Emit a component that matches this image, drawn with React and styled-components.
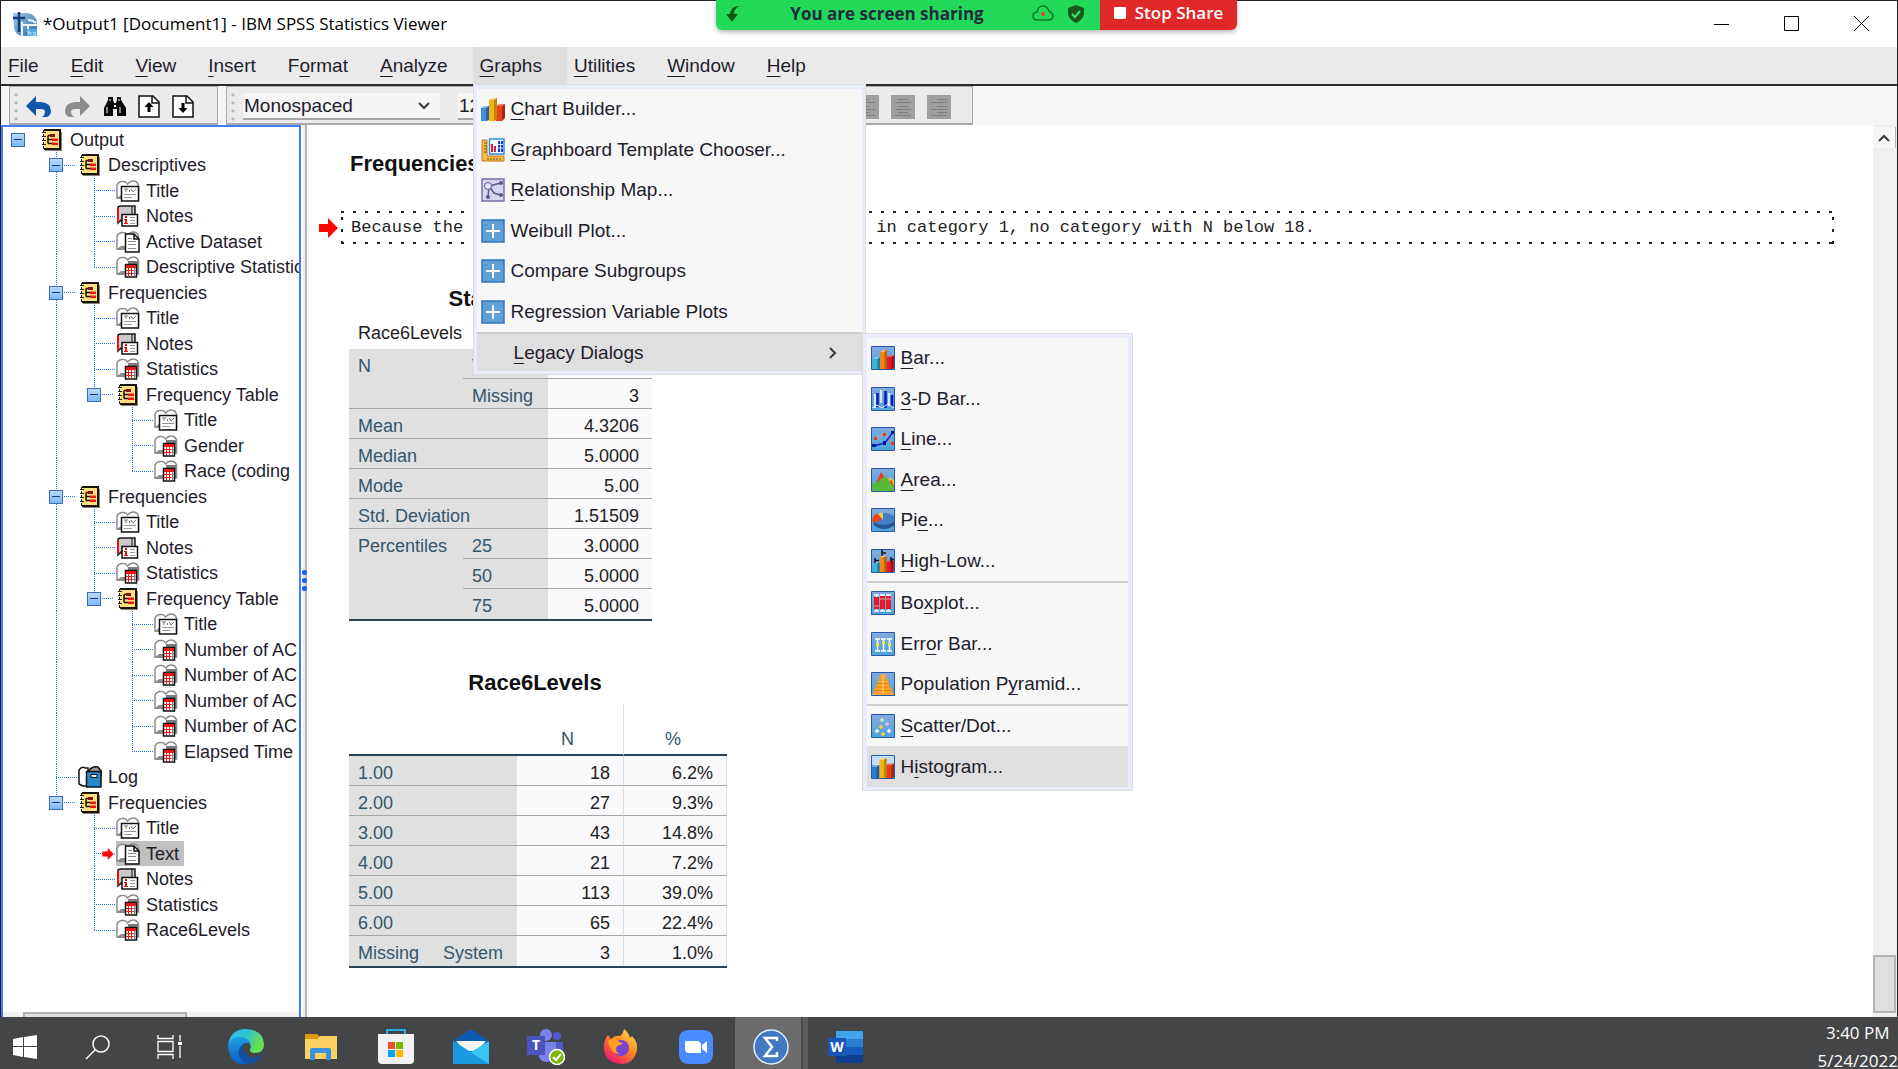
import React from "react";
import styled, { createGlobalStyle, css } from "styled-components";

const sans = `"Liberation Sans", Arial, sans-serif`;
const shell = `"Open Sans", "Noto Sans", sans-serif`;

const GlobalStyle = createGlobalStyle`
  * { box-sizing: border-box; }
  html, body { margin: 0; height: 100%; overflow: hidden; background: #fff; }
  button, select { font: inherit; color: inherit; margin: 0; padding: 0; border: 0; background: none; }
  h1, h2, h3, p { margin: 0; font: inherit; }
`;

/* ---------- frame ---------- */

const Desktop = styled.div`
  display: flex;
  flex-direction: column;
  height: 100vh;
  overflow: hidden;
  font-family: ${sans};
  color: #1f1c2c;
`;

const AppWindow = styled.main`
  flex: 1;
  min-height: 0;
  display: flex;
  flex-direction: column;
  background: #fff;
  border: solid #262024;
  border-width: 1px 1px 0 1px;
`;

const TitleBar = styled.header`
  height: 46px;
  flex: none;
  display: flex;
  align-items: center;
  padding-left: 12px;
`;

const WindowTitle = styled.h1`
  flex: 1;
  margin-left: 6px;
  font-family: ${shell};
  font-size: 17px;
  line-height: 24px;
  color: #000;
`;

const CaptionButton = styled.button`
  width: 70px;
  height: 46px;
  display: grid;
  place-items: center;
`;

/* ---------- screen sharing banner ---------- */

const ShareBanner = styled.aside`
  position: absolute;
  top: 0;
  left: calc(50% - 233px);
  z-index: 20;
  display: flex;
  height: 30px;
  border-radius: 0 0 6px 6px;
  overflow: hidden;
  font-family: ${shell};
  font-size: 17px;
  line-height: 24px;
  font-weight: 700;
  box-shadow: 0 2px 5px rgba(0, 0, 0, 0.3);
`;

const ShareStatus = styled.div`
  width: 384px;
  display: flex;
  align-items: center;
  padding: 0 16px 3px 10px;
  background: #23d959;
  color: #1e2c3c;
`;

const ShareText = styled.span`
  flex: 1;
  text-align: center;
`;

const ShareIcons = styled.span`
  display: flex;
  align-items: center;
  gap: 14px;
`;

const StopShare = styled.button`
  width: 137px;
  display: flex;
  align-items: center;
  justify-content: center;
  gap: 9px;
  padding-bottom: 4px;
  background: #e02828;
  color: #fff;
  font-weight: 600;
`;

const StopSquare = styled.span`
  width: 12px;
  height: 12px;
  border-radius: 1px;
  background: #fff;
`;

/* ---------- menus ---------- */

const MenuBar = styled.nav`
  height: 39px;
  flex: none;
  display: flex;
  background: #eaeaea;
  border-bottom: 2px solid #2b2b2b;
  font-size: 19px;
  line-height: 24px;
`;

const MenuSlot = styled.div`
  position: relative;
  display: flex;
`;

const MenuTitle = styled.button`
  padding: 0 25px 0 7px;
  background: ${(p) => (p.$open ? "#dfdfdf" : "transparent")};
`;

const Mnemonic = styled.span`
  text-decoration: underline;
  text-decoration-thickness: 1px;
  text-underline-offset: 4px;
`;

const Popup = styled.div`
  position: absolute;
  z-index: 10;
  top: ${(p) => (p.$sub ? "-1px" : "37px")};
  left: ${(p) => (p.$sub ? "100%" : "0")};
  width: ${(p) => (p.$sub ? "271px" : "393px")};
  padding: ${(p) => (p.$sub ? "4px 4px 3px" : "4px 3px 3px")};
  border: 1px solid #dcdce0;
  background: #e9edfb;
`;

const MenuGroup = styled.div`
  position: relative;
  background: #f7f7f7;
  & + & { border-top: 2px solid #cfcfcf; }
`;

const MenuItem = styled.button`
  width: 100%;
  height: 40px;
  display: flex;
  align-items: center;
  gap: 6px;
  padding: 0 25px 0 4px;
  text-align: left;
  background: ${(p) => (p.$active ? "#dfdfdf" : "transparent")};
  &:nth-child(even) { height: 41px; }
`;

const SubmenuItem = styled(MenuItem)`
  height: 37px;
  justify-content: space-between;
  padding-left: 37px;
`;

/* ---------- toolbars ---------- */

const ToolbarRow = styled.div`
  height: 39px;
  flex: none;
  display: flex;
  gap: 8px;
  padding-left: 8px;
  background: #f6f6f6;
`;

const Toolbar = styled.div`
  display: flex;
  align-items: center;
  gap: 8px;
  width: ${(p) => p.$width}px;
  padding: 3px 20px 0 4px;
  border: 1px solid #a9a9a9;
  border-bottom-width: 2px;
  background: #ebebeb;
`;

const ToolGroup = styled.div`
  display: flex;
  align-items: center;
  gap: ${(p) => p.$gap}px;
`;

const Grip = styled.span`
  width: 4px;
  height: 32px;
  background: radial-gradient(circle at 2px 4px, #b4b4b4 1px, #ebebeb 2px) 0 0 / 4px 8px;
`;

const ToolButton = styled.button`
  display: grid;
  place-items: center;
  width: 26px;
  height: 28px;
`;

const Field = styled.label`
  position: relative;
  display: flex;
  width: ${(p) => p.$width}px;
  height: 27px;
  background: #f5f5f5;
  border-bottom: 2px solid #a6a6a6;
  svg { position: absolute; right: 10px; top: 9px; pointer-events: none; }
`;

const Select = styled.select`
  appearance: none;
  width: 100%;
  padding-left: 1px;
  font-size: 19px;
  line-height: 24px;
`;

const Spacer = styled.span`
  flex: 1;
`;

/* ---------- outline tree ---------- */

const Workspace = styled.div`
  flex: 1;
  min-height: 0;
  display: flex;
`;

const Outline = styled.section`
  width: 300px;
  flex: none;
  display: flex;
  flex-direction: column;
  overflow: hidden;
  border: solid #3f7df0;
  border-width: 2px 2px 0 2px;
  font-size: 18px;
  line-height: 24px;
`;

const TreeList = styled.div`
  flex: 1;
  min-height: 0;
`;

const TreeRow = styled.div`
  display: flex;
  align-items: center;
  height: 25px;
  padding-left: 8px;
  white-space: nowrap;
  &:nth-child(even) { height: 26px; }
`;

const vDots = "repeating-linear-gradient(#1f7af0 0 1px, transparent 1px 2px)";
const hDots = "repeating-linear-gradient(90deg, #1f7af0 0 1px, transparent 1px 2px)";

const Rail = styled.span`
  flex: none;
  align-self: stretch;
  width: 38px;
  ${(p) => p.$line && css`background: ${vDots} 7px 0 / 1px 100% no-repeat;`}
`;

const Branch = styled.span`
  flex: none;
  align-self: stretch;
  width: 29px;
  display: flex;
  align-items: center;
  padding-left: ${(p) => (p.$pointer ? "15px" : "0")};
  ${(p) => p.$joined && css`
    background:
      ${vDots} 7px 0 / 1px ${p.$last ? "52%" : "100%"} no-repeat,
      ${hDots} 7px 50% / ${p.$book ? "20px" : "22px"} 1px no-repeat;
  `}
`;

const Toggle = styled.button`
  width: 14px;
  height: 14px;
  display: grid;
  place-items: center;
  border: 1px solid #3c6cb8;
  background: linear-gradient(#b9dafc, #7db8f8);
  &::after { content: ""; width: 8px; height: 1px; background: #173f80; }
`;

const Leaf = styled.span`
  display: flex;
  align-items: center;
  gap: 6px;
  height: 25px;
  padding-right: 5px;
  background: ${(p) => (p.$selected ? "#c0c0c0" : "transparent")};
`;

const TreeScroll = styled.div`
  height: 5px;
  flex: none;
  padding: 0 20px;
  background: #f1f1f1;
`;

const TreeThumb = styled.div`
  width: 164px;
  height: 5px;
  border: 2px solid #b0b0b0;
  border-bottom: 0;
  background: #dedede;
`;

const Splitter = styled.div`
  width: 6px;
  flex: none;
  display: flex;
  flex-direction: column;
  align-items: flex-end;
  justify-content: center;
  gap: 3px;
  padding-top: 18px;
  background: linear-gradient(90deg, #fff 0 2px, #ececec 2px 4px, #b9b9b9 4px 6px);
`;

const SplitDot = styled.span`
  width: 5px;
  height: 5px;
  border-radius: 2px;
  background: #1463ff;
`;

/* ---------- output document ---------- */

const Document = styled.section`
  flex: 1;
  min-width: 0;
  padding: 26px 39px 0 12px;
`;

const Heading = styled.h2`
  margin-left: 31px;
  font-size: 22px;
  line-height: 26px;
  font-weight: 700;
  color: #111;
`;

const NoteRow = styled.div`
  display: flex;
  align-items: center;
  gap: 3px;
  margin-top: 34px;
`;

const dash = "repeating-linear-gradient(90deg, #222 0 3px, transparent 3px 12px)";
const dot = "repeating-linear-gradient(transparent 0 6px, #222 6px 9px, transparent 9px 12px)";

const NoteBox = styled.p`
  flex: 1;
  display: flex;
  align-items: center;
  gap: 413px;
  height: 33px;
  padding-left: 10px;
  background:
    ${dash} 0 0 / 100% 2px no-repeat,
    ${dash} 0 100% / 100% 2px no-repeat,
    ${dot} 0 0 / 2px 100% no-repeat,
    ${dot} 100% 0 / 2px 100% no-repeat;
  font-family: "Liberation Mono", "Courier New", monospace;
  font-size: 17px;
  line-height: 24px;
  color: #222;
`;

const Figure = styled.figure`
  width: ${(p) => p.$width}px;
  margin: ${(p) => p.$top}px 0 0 30px;
`;

const FigureTitle = styled.h3`
  margin-bottom: 8px;
  padding-right: 6px;
  font-size: 22px;
  line-height: 26px;
  font-weight: 700;
  text-align: center;
  color: #111;
`;

const FigureNote = styled.p`
  padding: 0 0 3px 9px;
  font-size: 18px;
  line-height: 26px;
  color: #222;
`;

const DataTable = styled.table`
  width: 100%;
  table-layout: fixed;
  border-collapse: separate;
  border-spacing: 0;
  border-bottom: 2px solid #2a4456;
  font-size: 18px;
  line-height: 24px;
  tbody tr:last-child > * { border-bottom: 0; }
`;

const Stub = styled.th`
  height: 30px;
  padding: 5px 0 0 9px;
  vertical-align: top;
  text-align: left;
  font-weight: 400;
  color: #33566c;
  background: #e0e0e0;
  border-bottom: 1px solid ${(p) => (p.$open ? "#e0e0e0" : "#a6a6a6")};
`;

const Cell = styled.td`
  height: 30px;
  padding: 5px 13px 0 0;
  vertical-align: top;
  text-align: right;
  color: #222;
  background: #f9f9fb;
  border-bottom: 1px solid #a6a6a6;
  border-right: ${(p) => (p.$ruled ? "1px solid #dedede" : "0")};
`;

const Head = styled.th`
  height: 52px;
  padding: 0 5px 3px 0;
  vertical-align: bottom;
  font-weight: 400;
  color: #33566c;
  border-bottom: 2px solid #2a4456;
  border-right: ${(p) => (p.$ruled ? "1px solid #dedede" : "0")};
`;

const ScrollTrack = styled.div`
  width: 24px;
  flex: none;
  display: flex;
  flex-direction: column;
  justify-content: space-between;
  padding: 2px 1px 4px 0;
  background: #f0f0f0;
`;

const ScrollUp = styled.button`
  height: 21px;
  display: grid;
  place-items: center;
  background: #f7f7f7;
  border-right: 1px solid #b5b5b5;
`;

const ScrollThumb = styled.div`
  height: 58px;
  border: 2px solid #b2b2b2;
  background: #dfdfdf;
`;

/* ---------- taskbar ---------- */

const Taskbar = styled.footer`
  height: 52px;
  flex: none;
  display: flex;
  background: #444546;
  overflow: hidden;
`;

const TaskButton = styled.button`
  display: grid;
  place-items: center;
  width: ${(p) => p.$width}px;
  padding-top: 8px;
`;

const TaskGroup = styled.div`
  display: flex;
  margin-left: ${(p) => p.$lead}px;
`;

const ActiveTask = styled(TaskButton)`
  background: linear-gradient(90deg, transparent 0 2px, #6b6b6b 2px 68px, #4a4a4a 68px 70px, #5b5b5b 70px);
`;

const Clock = styled.div`
  margin-left: auto;
  padding-top: 2px;
  display: flex;
  flex-direction: column;
  align-items: center;
  font-family: ${shell};
  font-size: 17px;
  line-height: 28px;
  color: #fff;
`;

/* ---------- drawings ---------- */

const Svg = ({ s = 24, w, h, vb, children }) => (
  <svg width={w || s} height={h || s} viewBox={vb || `0 0 ${w || s} ${h || s}`} fill="none" aria-hidden="true">
    {children}
  </svg>
);

const SpssLogo = () => (
  <Svg>
    <defs>
      <linearGradient id="spss" x1="0" y1="0" x2="1" y2="1">
        <stop offset="0" stopColor="#a9cdea" /><stop offset="1" stopColor="#2a6ba8" />
      </linearGradient>
    </defs>
    <path d="M0 1H14Q24 2 24 12V24H8Q2 22 1 16Z" fill="url(#spss)" />
    <path d="M9 10V24M15 12V24M9 13H24M15 8Q20 8 23 11" stroke="#eaf4fc" strokeWidth="2" />
    <path d="M0 6H12M6 0V20" stroke="#14387c" strokeWidth="2.5" />
    <path d="M14 17H24V24H14Z" fill="#5aa9e0" />
    <path d="M15.500 18V23M15.500 20.500H18V23M20 20.500H22.500V23H20" stroke="#b9e0f8" />
  </Svg>
);

const Chevron = () => (
  <Svg w={12} h={8}><path d="M1 1L6 6L11 1" stroke="#3a3a3a" strokeWidth="2" /></Svg>
);

const Undo = ({ flip, color }) => (
  <Svg w={26} h={24}>
    <g transform={flip ? "matrix(-1 0 0 1 26 0)" : undefined}>
      <path d="M0 11L10 1V7H15Q25 8 25 16Q25 20 21 22H16Q19 20 19 17Q19 14 15 14H10V21Z" fill={color} />
    </g>
  </Svg>
);

const Binoculars = () => (
  <Svg>
    <path d="M6 2H10V5L11 8H13L14 5V2H18V5L23 13V21H14V14H10V21H1V13L5 5V2Z" fill="#080808" />
    <path d="M6 5H8M15 5H17M4 12V18M17 12V18" stroke="#fff" />
    <path d="M11 10H13V12H11Z" fill="#fff" />
  </Svg>
);

const PageArrow = ({ up }) => (
  <Svg w={22} h={24}>
    <path d="M1 1H15L21 7V22H1Z" fill="#fff" stroke="#111" strokeWidth="1.500" />
    <path d="M14 1V8H21" stroke="#111" strokeWidth="1.500" />
    <path d={up ? "M11 7L15.500 12H12.500V17H9.500V12H6.500Z" : "M11 18L6.500 13H9.500V8H12.500V13H15.500Z"} fill="#000" />
  </Svg>
);

const AlignIcon = ({ kind }) => {
  const long = [4, 20];
  const short = kind === "left" ? [4, 14] : kind === "right" ? [10, 20] : [7, 17];
  return (
    <Svg>
      <path d="M0 0H24V24H0Z" fill="#9f9f9f" />
      {[5, 8, 12, 15, 18, 21].map((y, i) => {
        const [a, b] = i % 2 ? long : short;
        return <path key={y} d={`M${a} ${y - 0.5}H${b}`} stroke="#7d7d7d" />;
      })}
    </Svg>
  );
};

const Book = () => (
  <Svg w={24} h={22}>
    <path d="M5 3H22V22H5Z" fill="#8b8574" />
    <path d="M4 1H20V20H4Z" fill="#ffe07e" />
    <path d="M4 1H20V20H4" stroke="#1a1408" strokeWidth="2" />
    <path d="M2 3.500H6M2 7.500H6M2 11.500H6M2 15.500H6" stroke="#222" />
    <path d="M3.500 1V20" stroke="#222" strokeDasharray="3 1" />
    <path d="M8 6.500V14.500M8 6.500H10M8 10.500H12M8 14.500H12" stroke="#111" strokeWidth="1.500" />
    <path d="M10 5H15V8H10Z" fill="#8d1111" />
    <path d="M12 9.500H18V12H12ZM12 13.500H18V16H12Z" fill="#f01515" />
  </Svg>
);

const LeafBase = ({ dark }) => (
  <>
    <path d="M1 18V5Q3 1 7 1.500Q10 1 11.500 4Q14 1 17 1Q21 1 22.500 5V18Z" fill="#fff" stroke="#8c8c8c" strokeWidth="1.500" />
    {dark && <path d="M12 5L22 5V18H12Z" fill="#7c7c7c" />}
    <path d="M1 18L5 15H10V19H1Z" fill="#8c8c8c" />
  </>
);

const TitleIcon = () => (
  <Svg w={24} h={22}>
    <LeafBase />
    <path d="M5.500 6.500H22.500V21H5.500Z" fill="#fff" stroke="#111" strokeWidth="1.500" />
    <path d="M8 9H12M10 9V12M13.500 10V12M15 9L17 12L20 9" stroke="#777" />
    <path d="M8 14.500H20M8 17.500H16" stroke="#999" />
  </Svg>
);

const NotesIcon = () => (
  <Svg w={24} h={22}>
    <path d="M2 2Q3 1 5 1H19V16H4L2 18Z" fill="#c9c9c9" stroke="#1a1a1a" strokeWidth="1.500" />
    <path d="M1 3H3V17H1Z" fill="#e81414" />
    <path d="M16 1V10M4 15H6" stroke="#111" />
    <path d="M6 9.500H21.500V21H6Z" fill="#fff" stroke="#111" strokeWidth="1.500" />
    <path d="M9 11H11V13H9ZM8 14H11V18H12V19H8V18H9V15H8Z" fill="#f01515" />
    <path d="M14 12.500H19M14 15.500H19M14 18.500H19" stroke="#999" />
  </Svg>
);

const TextIcon = () => (
  <Svg w={24} h={22}>
    <LeafBase />
    <path d="M9.500 3H18L23 8V21H9.500Z" fill="#fff" stroke="#111" strokeWidth="1.500" />
    <path d="M18 3V8H23" stroke="#111" strokeWidth="1.500" />
    <path d="M12 7.500H16M12 10.500H20M12 13.500H20M12 17.500H20" stroke="#888" />
  </Svg>
);

const GridIcon = () => (
  <Svg w={24} h={22}>
    <LeafBase dark />
    <path d="M9.500 8.500H20.500V21H9.500Z" fill="#fff" stroke="#111" strokeWidth="1.500" />
    <path d="M10 9H20V12H10Z" fill="#f01515" />
    <path d="M12.500 11V20M15.500 11V20M10 14.500H17M10 17.500H17" stroke="#f01515" />
    <path d="M18.500 12V20M17 14.500H20M17 17.500H20" stroke="#888" />
  </Svg>
);

const LogIcon = () => (
  <Svg w={24} h={22}>
    <path d="M1 4Q4 0 7 2H10V20H5L1 18Z" fill="#fff" stroke="#111" strokeWidth="1.500" />
    <path d="M11 4Q15 0 20 1L23 5V9H11Z" fill="#9a9a9a" stroke="#111" strokeWidth="1.500" />
    <path d="M8.500 5.500H23V21H8.500Z" fill="#2a87c8" stroke="#111" strokeWidth="1.500" />
    <path d="M13 8.500H19V11.500H13Z" fill="#d9ecfa" stroke="#111" />
  </Svg>
);

const RedArrow = ({ small }) => (
  <Svg w={small ? 12 : 19} h={small ? 12 : 20} vb="0 0 19 20">
    <path d="M0 6H9V0L19 10L9 20V14H0Z" fill="#fb0505" />
  </Svg>
);

const Bars3D = ({ a = "#3f8ee0", b = "#f0b414", c = "#e8401c" }) => (
  <g>
    <path d="M0 11L3 9H8V23L6 24H0Z" fill={a} />
    <path d="M5 11L8 9V22L5 24Z" fill="#000" opacity="0.3" />
    <path d="M0 11L3 9H8L5 11Z" fill="#fff" opacity="0.4" />
    <path d="M15 9L18 7H24V21L21 24H15Z" fill={c} />
    <path d="M21 9L24 7V21L21 24Z" fill="#000" opacity="0.3" />
    <path d="M15 9L18 7H24L21 9Z" fill="#fff" opacity="0.3" />
    <path d="M8 3L11 1H16V22L14 24H8Z" fill={b} />
    <path d="M13 3L16 1V22L13 24Z" fill="#000" opacity="0.25" />
    <path d="M8 3L11 1H16L13 3Z" fill="#fff" opacity="0.45" />
  </g>
);

const ChartBuilderIcon = () => <Svg><Bars3D /></Svg>;

const GraphboardIcon = () => (
  <Svg>
    <path d="M1 2H6V18H23V23H1Z" fill="#f4c04a" stroke="#c07818" />
    <path d="M3 5H6M3 8H6M3 11H6M3 14H6M7 20V22M10 20V22M13 20V22M16 20V22M19 20V22" stroke="#7a4a08" />
    <path d="M8.500 1H23V16H8.500Z" fill="#f4faff" stroke="#2b90e0" strokeWidth="1.500" />
    <path d="M10 6H12V14H10ZM13 8H15V14H13Z" fill="#e0203a" />
    <path d="M17 3H22V14H17Z" fill="#1838c0" />
    <path d="M17 6.500H22M17 10H22M19.500 3V14" stroke="#dbe6ff" />
  </Svg>
);

const RelationIcon = () => (
  <Svg>
    <path d="M1 1H23V23H1Z" fill="#d6d4f0" stroke="#7672a8" strokeWidth="1.500" />
    <path d="M8 8L20 5M8 8L13 15L19 17M8 8L7 19" stroke="#5b588c" strokeWidth="1.500" />
    <circle cx="7" cy="8" r="3.500" fill="#e8e6fa" stroke="#5b588c" />
    <circle cx="20" cy="5" r="2" fill="#5b588c" /><circle cx="20" cy="17" r="2" fill="#5b588c" />
    <circle cx="7" cy="19" r="2" fill="#5b588c" />
  </Svg>
);

const PlusIcon = () => (
  <Svg>
    <path d="M1 1H23V23H1Z" fill="#5f9fd4" stroke="#3176c4" strokeWidth="1.500" />
    <path d="M12 5V19M5 12H19" stroke="#f4faff" strokeWidth="2" />
  </Svg>
);

const Tile = ({ children }) => (
  <Svg>
    <defs>
      <linearGradient id="tile" x1="0" y1="0" x2="0" y2="1">
        <stop offset="0" stopColor="#83aade" /><stop offset="1" stopColor="#4ea4d8" />
      </linearGradient>
    </defs>
    <path d="M1 1H23V23H1Z" fill="url(#tile)" />
    {children}
    <path d="M0.500 0.500H23.500V23.500H0.500Z" stroke="#2856a8" />
  </Svg>
);

const tiles = {
  bar: <Tile><g transform="translate(2 3) scale(.88)"><Bars3D a="#38b4dc" b="#f08414" c="#e8142c" /></g></Tile>,
  bar3d: (
    <Tile>
      <path d="M4 7V21M10 3V16M18 6V19" stroke="#fff" strokeWidth="1.500" />
      <path d="M6.500 6V20M14.500 4V21M21 8V20" stroke="#0a18c8" strokeWidth="2.500" />
      <path d="M1 21L6 18L11 21L17 17L23 21" stroke="#e4f0fc" />
    </Tile>
  ),
  line: (
    <Tile>
      <path d="M3 12L13 7L21 16" stroke="#f09080" />
      <path d="M2 19L14 16L22 5" stroke="#1424c8" strokeWidth="1.500" />
      <path d="M3 10H6V13H3ZM12 6H15V9H12ZM20 15H23V18H20Z" fill="#d84020" />
      <path d="M1 17H5V20H1ZM12 14H15V18H12ZM20 4H23V7H20Z" fill="#0814a0" />
    </Tile>
  ),
  area: (
    <Tile>
      <path d="M18 9L23 12V20H17Z" fill="#f4c030" />
      <path d="M4 17L10 4L20 18Z" fill="#ee3c1c" />
      <path d="M1 16L5 15L14 8L23 18V23H1Z" fill="#58b838" />
      <path d="M20 11L23 19L19 14Z" fill="#e03c1c" />
    </Tile>
  ),
  pie: (
    <Tile>
      <ellipse cx="13" cy="14" rx="11" ry="7" fill="#245898" />
      <ellipse cx="13" cy="11" rx="11" ry="6" fill="#4080c8" />
      <path d="M11 12L2 15Q0 9 5 6L7 6Z" fill="#ee4418" />
      <path d="M12 12L7 6Q10 4 12 5Z" fill="#f8c830" />
    </Tile>
  ),
  highlow: (
    <Tile>
      <g transform="translate(2 6) scale(.86 .75)"><Bars3D a="#38b4dc" b="#f08414" c="#e8142c" /></g>
      <path d="M4 9V14M4 11.500H8M11 1V7M11 4H15M20 8V13M20 10.500H23" stroke="#101020" strokeWidth="1.500" />
    </Tile>
  ),
  box: (
    <Tile>
      {[3, 9, 15].map((x, i) => (
        <g key={x}>
          <path d={`M${x} 4H${x + 5}M${x} 20H${x + 5}M${x + 2.5} 4V20`} stroke="#fff" strokeWidth="1.500" />
          <path d={`M${x} ${i ? 5 : 6}H${x + 5}V18H${x}Z`} fill="#e81828" />
          <path d={`M${x} ${i ? 8 : 15}H${x + 5}`} stroke="#f8a0a0" />
        </g>
      ))}
    </Tile>
  ),
  error: (
    <Tile>
      {[6, 12, 18].map((x, i) => (
        <g key={x}>
          <path d={`M${x - 2} 7H${x + 3}M${x - 2} 19H${x + 3}M${x + 0.5} 7V19`} stroke="#fff" strokeWidth="1.500" />
          <path d={`M${x - 1} ${i === 1 ? 9 : 11}H${x + 2}V${i === 1 ? 12 : 14}H${x - 1}Z`} fill="#f4f040" />
        </g>
      ))}
    </Tile>
  ),
  pyramid: (
    <Tile>
      <path d="M10 2H14L23 23H1Z" fill="#fba52c" />
      <path d="M8 8H16M6 11.500H18M5 15H19M3 18.500H21" stroke="#dc7c10" />
      <path d="M12 3V22" stroke="#ffd088" />
    </Tile>
  ),
  scatter: (
    <Tile>
      {[[11, 6, "#c8f0a8"], [16, 10, "#f0b8f0"], [10, 13, "#f8d040"], [6, 17, "#fff"], [18, 17, "#fff"], [12, 20, "#f8d040"]].map(
        ([x, y, c]) => <path key={`${x}-${y}`} d={`M${x - 2} ${y}H${x + 2}M${x} ${y - 2}V${y + 2}`} stroke={c} strokeWidth="1.500" />
      )}
    </Tile>
  ),
  hist: (
    <Tile>
      <path d="M1 1H23V10H1Z" fill="#c4dcf8" />
      <g transform="translate(1 2) scale(.92)"><Bars3D a="#2c7cd4" b="#f4b414" c="#e83c18" /></g>
    </Tile>
  ),
};

const WindowsIcon = () => (
  <Svg><path d="M0 4L10 2V11H0ZM11 2L24 0V11H11ZM0 12H10V22L0 20ZM11 12H24V24L11 22Z" fill="#fff" /></Svg>
);
const SearchIcon = () => (
  <Svg w={25} h={25}><circle cx="16" cy="9" r="8" stroke="#fff" strokeWidth="1.500" /><path d="M10 15L1 24" stroke="#fff" strokeWidth="1.500" /></Svg>
);
const TaskViewIcon = () => (
  <Svg w={25} h={24}>
    <path d="M1 0V3.500H16V0M1 24V19.500H16V24M1 6.500H16V16.500H1ZM23 0V6M23 11V23" stroke="#fff" strokeWidth="1.300" />
    <path d="M21 7H25V10H21Z" fill="#fff" />
  </Svg>
);
const EdgeIcon = () => (
  <Svg s={36}>
    <defs>
      <linearGradient id="edgeTop" x1="0" y1="0" x2="1" y2="0.400">
        <stop offset="0" stopColor="#35b8f0" /><stop offset="0.500" stopColor="#2cc3d2" /><stop offset="1" stopColor="#68e04c" />
      </linearGradient>
      <linearGradient id="edgeLow" x1="0" y1="0" x2="0" y2="1">
        <stop offset="0" stopColor="#1b9de2" /><stop offset="1" stopColor="#0c5fc4" />
      </linearGradient>
    </defs>
    <path d="M0 17Q2 0 18 0Q35 1 36 15Q36 24 27 24Q21 24 22 20Q24 17 21 14Q16 8 8 10Q2 12 0 17Z" fill="url(#edgeTop)" />
    <path d="M0 17Q2 8 12 8Q20 8 23 15Q15 12 13 19Q10 29 20 35Q2 38 0 17Z" fill="url(#edgeLow)" />
    <path d="M14 16Q8 22 12 29Q17 37 26 34Q31 31 34 26Q26 31 19 26Q13 22 17 15Z" fill="#11509e" />
  </Svg>
);
const FolderIcon = () => (
  <Svg w={32} h={27}>
    <path d="M0 0H12L15 3V6H0Z" fill="#dc9a08" />
    <path d="M0 5H12L15 2H32V25H0Z" fill="#fcd062" />
    <path d="M5 26V16Q5 14 7 14H24Q26 14 26 16V26H21V19H10V26Z" fill="#3a92dc" />
  </Svg>
);
const StoreIcon = () => (
  <Svg w={36} h={36}>
    <path d="M9 7V1H27V7" stroke="#2aaae8" strokeWidth="2" />
    <path d="M0 5H36V31Q36 35 32 35H4Q0 35 0 31Z" fill="#f2f2f2" />
    <path d="M10 13H17V20H10Z" fill="#f05022" /><path d="M18 13H25V20H18Z" fill="#7fba00" />
    <path d="M10 21H17V28H10Z" fill="#00a4ef" /><path d="M18 21H25V28H18Z" fill="#ffb900" />
  </Svg>
);
const MailIcon = () => (
  <Svg w={36} h={34}>
    <path d="M0 11L15 1Q18 -1 21 1L36 11V22H0Z" fill="#0d5cb0" />
    <path d="M3 11H33L24 21H12Z" fill="#f4f4f4" />
    <path d="M0 11L18 22L36 11V34H0Z" fill="#38c4f0" />
    <path d="M0 11L36 34H0Z" fill="#1a98e0" />
  </Svg>
);

const IconText = styled.text`
  font-family: ${shell};
  font-weight: 700;
  font-size: ${(p) => p.$size}px;
  fill: #fff;
  text-anchor: middle;
`;

const TeamsIcon = () => (
  <Svg w={38} h={36}>
    <circle cx="19" cy="6" r="6" fill="#7b83eb" /><circle cx="30" cy="7" r="4" fill="#5059c9" />
    <path d="M25 13H36V24Q35 29 30 29H25Z" fill="#5059c9" />
    <path d="M11 13H29V24Q28 33 20 33Q12 33 11 24Z" fill="#7b83eb" />
    <path d="M0 7H18V26H0Z" fill="#4b53bc" />
    <IconText x="9" y="21" $size={14}>T</IconText>
    <circle cx="30" cy="28" r="7.500" fill="#7cb80a" stroke="#fff" strokeWidth="1.500" />
    <path d="M26 28L29 31L34 25" stroke="#fff" strokeWidth="2" />
  </Svg>
);
const FirefoxIcon = () => (
  <Svg w={36} h={36}>
    <defs>
      <linearGradient id="fox" x1="1" y1="0" x2="0.300" y2="1">
        <stop offset="0" stopColor="#fff04a" /><stop offset="0.500" stopColor="#ff8a20" /><stop offset="1" stopColor="#f01870" />
      </linearGradient>
    </defs>
    <path d="M5 6L8 10Q12 6 17 7Q20 5 21 0Q26 4 27 9L29 7Q35 13 34 21Q31 35 18 35Q3 34 1 21Q0 12 5 6Z" fill="url(#fox)" />
    <circle cx="18" cy="19" r="8" fill="#7844d8" />
    <path d="M5 12Q12 7 16 13L20 14Q17 17 14 17Q11 22 17 25Q8 26 5 12Z" fill="#ffa01c" />
  </Svg>
);
const ZoomIcon = () => (
  <Svg s={34}>
    <path d="M10 0H24Q34 0 34 10V24Q34 34 24 34H10Q0 34 0 24V10Q0 0 10 0Z" fill="#4a8cff" />
    <path d="M6 11H18Q22 11 22 15V23H10Q6 23 6 19ZM23 15L28 11V23L23 19Z" fill="#fff" />
  </Svg>
);
const SigmaIcon = () => (
  <Svg s={36}>
    <circle cx="18" cy="18" r="17" fill="#4178c0" stroke="#dcecfc" strokeWidth="1.500" />
    <path d="M24 12V9H12L19 18L12 27H24V23" stroke="#fff" strokeWidth="2.500" />
  </Svg>
);
const WordIcon = () => (
  <Svg w={36} h={32}>
    <path d="M8 0H34Q35 0 35 1V8H8Z" fill="#41a5ee" /><path d="M8 8H35V16H8Z" fill="#2b7cd3" />
    <path d="M8 16H35V24H8Z" fill="#185abd" /><path d="M8 24H35V31Q35 32 34 32H8Z" fill="#103f91" />
    <path d="M0 7H18V25H0Z" fill="#1a56b8" />
    <IconText x="9" y="21" $size={14}>W</IconText>
  </Svg>
);

/* ---------- data ---------- */

const menus = ["&File", "&Edit", "&View", "&Insert", "F&ormat", "&Analyze", "&Graphs", "&Utilities", "&Window", "&Help"];

const graphItems = [
  ["&Chart Builder...", <ChartBuilderIcon />],
  ["&Graphboard Template Chooser...", <GraphboardIcon />],
  ["&Relationship Map...", <RelationIcon />],
  ["Weibull Plot...", <PlusIcon />],
  ["Compare Subgroups", <PlusIcon />],
  ["Regression Variable Plots", <PlusIcon />],
];

const legacyGroups = [
  [["&Bar...", "bar"], ["&3-D Bar...", "bar3d"], ["&Line...", "line"], ["&Area...", "area"], ["Pi&e...", "pie"], ["&High-Low...", "highlow"]],
  [["Bo&xplot...", "box"], ["Err&or Bar...", "error"], ["Population P&yramid...", "pyramid"]],
  [["&Scatter/Dot...", "scatter"], ["H&istogram...", "hist", true]],
];

const icons = { book: Book, title: TitleIcon, notes: NotesIcon, text: TextIcon, grid: GridIcon, log: LogIcon };

const leaf = (label, icon, extra) => ({ label, icon, ...extra });
const branch = (label, children) => ({ label, icon: "book", children });

const outline = branch("Output", [
  branch("Descriptives", [
    leaf("Title", "title"), leaf("Notes", "notes"), leaf("Active Dataset", "text"), leaf("Descriptive Statistics", "grid"),
  ]),
  branch("Frequencies", [
    leaf("Title", "title"), leaf("Notes", "notes"), leaf("Statistics", "grid"),
    branch("Frequency Table", [leaf("Title", "title"), leaf("Gender", "grid"), leaf("Race (coding", "grid")]),
  ]),
  branch("Frequencies", [
    leaf("Title", "title"), leaf("Notes", "notes"), leaf("Statistics", "grid"),
    branch("Frequency Table", [
      leaf("Title", "title"), leaf("Number of AC", "grid"), leaf("Number of AC", "grid"),
      leaf("Number of AC", "grid"), leaf("Number of AC", "grid"), leaf("Elapsed Time", "grid"),
    ]),
  ]),
  leaf("Log", "log"),
  branch("Frequencies", [
    leaf("Title", "title"), leaf("Text", "text", { selected: true }), leaf("Notes", "notes"),
    leaf("Statistics", "grid"), leaf("Race6Levels", "grid"),
  ]),
]);

const flatten = (node, rails = [], last = true, level = 0) => [
  { ...node, rails, last, level },
  ...(node.children || []).flatMap((c, i, all) =>
    flatten(c, level === 0 ? [false] : [...rails, !last], i === all.length - 1, level + 1)
  ),
];

const frequencies = [
  ["1.00", "18", "6.2%"], ["2.00", "27", "9.3%"], ["3.00", "43", "14.8%"],
  ["4.00", "21", "7.2%"], ["5.00", "113", "39.0%"], ["6.00", "65", "22.4%"],
];

/* ---------- parts ---------- */

const Label = ({ text }) => {
  const at = text.indexOf("&");
  if (at < 0) return <span>{text}</span>;
  return (
    <span>
      {text.slice(0, at)}
      <Mnemonic>{text[at + 1]}</Mnemonic>
      {text.slice(at + 2)}
    </span>
  );
};

const GraphsMenu = () => (
  <Popup role="menu">
    <MenuGroup>
      {graphItems.map(([text, icon]) => (
        <MenuItem key={text} role="menuitem">{icon}<Label text={text} /></MenuItem>
      ))}
    </MenuGroup>
    <MenuGroup>
      <SubmenuItem role="menuitem" aria-haspopup="true" aria-expanded="true" $active>
        <Label text="&Legacy Dialogs" />
        <Svg w={8} h={12}><path d="M1 1L6 6L1 11" stroke="#3a3a3a" strokeWidth="2" /></Svg>
      </SubmenuItem>
      <Popup role="menu" $sub>
        {legacyGroups.map((group, i) => (
          <MenuGroup key={i}>
            {group.map(([text, icon, active]) => (
              <MenuItem key={text} role="menuitem" $active={active}>{tiles[icon]}<Label text={text} /></MenuItem>
            ))}
          </MenuGroup>
        ))}
      </Popup>
    </MenuGroup>
  </Popup>
);

const TreeNode = ({ node }) => {
  const Icon = icons[node.icon];
  return (
    <TreeRow role="treeitem" aria-selected={!!node.selected}>
      {node.rails.map((line, i) => <Rail key={i} $line={line} />)}
      <Branch $joined={node.level > 0} $last={node.last} $book={!!node.children} $pointer={node.selected}>
        {node.children && <Toggle aria-label={`Collapse ${node.label}`} />}
        {node.selected && <RedArrow small />}
      </Branch>
      <Leaf $selected={node.selected}><Icon />{node.label}</Leaf>
    </TreeRow>
  );
};

const StatisticsTable = () => (
  <DataTable>
    <colgroup><col style={{ width: 114 }} /><col style={{ width: 85 }} /><col /></colgroup>
    <tbody>
      <tr><Stub rowSpan={2}>N</Stub><Stub>Valid</Stub><Cell>287</Cell></tr>
      <tr><Stub>Missing</Stub><Cell>3</Cell></tr>
      <tr><Stub colSpan={2}>Mean</Stub><Cell>4.3206</Cell></tr>
      <tr><Stub colSpan={2}>Median</Stub><Cell>5.0000</Cell></tr>
      <tr><Stub colSpan={2}>Mode</Stub><Cell>5.00</Cell></tr>
      <tr><Stub colSpan={2}>Std. Deviation</Stub><Cell>1.51509</Cell></tr>
      <tr><Stub rowSpan={3} $open>Percentiles</Stub><Stub>25</Stub><Cell>3.0000</Cell></tr>
      <tr><Stub>50</Stub><Cell>5.0000</Cell></tr>
      <tr><Stub>75</Stub><Cell>5.0000</Cell></tr>
    </tbody>
  </DataTable>
);

const FrequencyTable = () => (
  <DataTable>
    <colgroup><col style={{ width: 85 }} /><col style={{ width: 83 }} /><col style={{ width: 107 }} /><col /></colgroup>
    <thead><tr><Head colSpan={2} aria-label="Level" /><Head $ruled>N</Head><Head>%</Head></tr></thead>
    <tbody>
      {frequencies.map(([level, n, pct]) => (
        <tr key={level}><Stub colSpan={2}>{level}</Stub><Cell $ruled>{n}</Cell><Cell $ruled>{pct}</Cell></tr>
      ))}
      <tr><Stub>Missing</Stub><Stub>System</Stub><Cell $ruled>3</Cell><Cell $ruled>1.0%</Cell></tr>
    </tbody>
  </DataTable>
);

export default function App() {
  return (
    <Desktop>
      <GlobalStyle />
      <ShareBanner>
        <ShareStatus>
          <Svg w={16} h={18}><path d="M15 1Q9 1 8 9H12L6 17L0 9H4Q5 0 15 1Z" fill="#0b5a10" /></Svg>
          <ShareText>You are screen sharing</ShareText>
          <ShareIcons>
            <Svg w={22} h={17}>
              <path d="M5 15Q1 15 1 11Q1 8 5 7Q6 1 11 1Q15 1 17 6Q21 8 21 12Q20 15 17 15Z" stroke="#0a7a28" strokeWidth="1.500" />
              <circle cx="11" cy="9" r="2" fill="#f04030" />
            </Svg>
            <Svg w={16} h={18}>
              <path d="M8 0L16 3V9Q15 15 8 18Q1 15 0 9V3Z" fill="#155c1c" />
              <path d="M4 9L7 12L12 6" stroke="#40e070" strokeWidth="2" />
            </Svg>
          </ShareIcons>
        </ShareStatus>
        <StopShare><StopSquare />Stop Share</StopShare>
      </ShareBanner>

      <AppWindow>
        <TitleBar>
          <SpssLogo />
          <WindowTitle>*Output1 [Document1] - IBM SPSS Statistics Viewer</WindowTitle>
          <CaptionButton aria-label="Minimize"><Svg s={16}><path d="M0 8.500H15" stroke="#000" /></Svg></CaptionButton>
          <CaptionButton aria-label="Maximize"><Svg s={16}><path d="M0.500 0.500H14.500V14.500H0.500Z" stroke="#000" /></Svg></CaptionButton>
          <CaptionButton aria-label="Close"><Svg s={16}><path d="M0 0L15 15M15 0L0 15" stroke="#000" /></Svg></CaptionButton>
        </TitleBar>

        <MenuBar>
          {menus.map((m) => (
            <MenuSlot key={m}>
              <MenuTitle $open={m === "&Graphs"}><Label text={m} /></MenuTitle>
              {m === "&Graphs" && <GraphsMenu />}
            </MenuSlot>
          ))}
        </MenuBar>

        <ToolbarRow>
          <Toolbar $width={209}>
            <Grip />
            <ToolGroup $gap={12}>
              <ToolButton aria-label="Undo"><Undo color="#0f57a8" /></ToolButton>
              <ToolButton aria-label="Redo"><Undo flip color="#8c8c8c" /></ToolButton>
              <ToolButton aria-label="Find"><Binoculars /></ToolButton>
            </ToolGroup>
            <ToolGroup $gap={8}>
              <ToolButton aria-label="Previous page"><PageArrow up /></ToolButton>
              <ToolButton aria-label="Next page"><PageArrow /></ToolButton>
            </ToolGroup>
          </Toolbar>
          <Toolbar $width={747}>
            <Grip />
            <ToolGroup $gap={18}>
              <Field $width={197}>
                <Select aria-label="Font" defaultValue="Monospaced"><option>Monospaced</option></Select>
                <Chevron />
              </Field>
              <Field $width={72}>
                <Select aria-label="Font size" defaultValue="12"><option>12</option></Select>
                <Chevron />
              </Field>
            </ToolGroup>
            <Spacer />
            <ToolGroup $gap={10}>
              <ToolButton aria-label="Align left"><AlignIcon kind="left" /></ToolButton>
              <ToolButton aria-label="Center"><AlignIcon kind="center" /></ToolButton>
              <ToolButton aria-label="Align right"><AlignIcon kind="right" /></ToolButton>
            </ToolGroup>
          </Toolbar>
        </ToolbarRow>

        <Workspace>
          <Outline>
            <TreeList role="tree">
              {flatten(outline).map((node, i) => <TreeNode key={i} node={node} />)}
            </TreeList>
            <TreeScroll><TreeThumb /></TreeScroll>
          </Outline>
          <Splitter><SplitDot /><SplitDot /><SplitDot /></Splitter>

          <Document>
            <Heading>Frequencies</Heading>
            <NoteRow>
              <RedArrow />
              <NoteBox>
                <span>Because the</span>
                <span>in category 1, no category with N below 18.</span>
              </NoteBox>
            </NoteRow>
            <Figure $width={303} $top={42}>
              <FigureTitle>Statistics</FigureTitle>
              <FigureNote>Race6Levels</FigureNote>
              <StatisticsTable />
            </Figure>
            <Figure $width={378} $top={49}>
              <FigureTitle>Race6Levels</FigureTitle>
              <FrequencyTable />
            </Figure>
          </Document>

          <ScrollTrack>
            <ScrollUp aria-label="Scroll up"><Svg w={12} h={8}><path d="M1 7L6 2L11 7" stroke="#3a3a3a" strokeWidth="2" /></Svg></ScrollUp>
            <ScrollThumb />
          </ScrollTrack>
        </Workspace>
      </AppWindow>

      <Taskbar>
        <TaskButton $width={50} aria-label="Start"><WindowsIcon /></TaskButton>
        <TaskGroup $lead={11}>
          <TaskButton $width={72} aria-label="Search"><SearchIcon /></TaskButton>
          <TaskButton $width={72} aria-label="Task view"><TaskViewIcon /></TaskButton>
        </TaskGroup>
        <TaskGroup $lead={3}>
          <TaskButton $width={75} aria-label="Edge"><EdgeIcon /></TaskButton>
          <TaskButton $width={75} aria-label="File Explorer"><FolderIcon /></TaskButton>
          <TaskButton $width={75} aria-label="Store"><StoreIcon /></TaskButton>
          <TaskButton $width={75} aria-label="Mail"><MailIcon /></TaskButton>
          <TaskButton $width={75} aria-label="Teams"><TeamsIcon /></TaskButton>
          <TaskButton $width={75} aria-label="Firefox"><FirefoxIcon /></TaskButton>
          <TaskButton $width={75} aria-label="Zoom"><ZoomIcon /></TaskButton>
          <ActiveTask $width={75} aria-label="SPSS Statistics"><SigmaIcon /></ActiveTask>
          <TaskButton $width={75} aria-label="Word"><WordIcon /></TaskButton>
        </TaskGroup>
        <Clock><span>3:40 PM</span><span>5/24/2022</span></Clock>
      </Taskbar>
    </Desktop>
  );
}
